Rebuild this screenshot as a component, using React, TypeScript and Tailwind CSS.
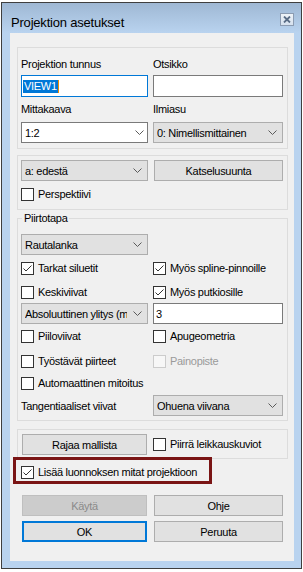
import React from "react";

function Chevron() {
  return (
    <svg width="9" height="5" viewBox="0 0 9 5" className="shrink-0">
      <path d="M0.5 0.5 L4.5 4.5 L8.5 0.5" stroke="#5a5a5a" strokeWidth="1" fill="none" />
    </svg>
  );
}

function Check({ checked = false, disabled = false }: { checked?: boolean; disabled?: boolean }) {
  return (
    <span
      className={
        disabled
          ? "w-[13px] h-[13px] border border-[#cccccc] bg-[#f7f7f7] flex items-center justify-center shrink-0"
          : "w-[13px] h-[13px] border border-[#333333] bg-white flex items-center justify-center shrink-0"
      }
    >
      {checked && (
        <svg width="11" height="11" viewBox="0 0 11 11">
          <path d="M1.5 5.5 L4 8 L9.5 2.5" stroke="#333333" strokeWidth="1" fill="none" />
        </svg>
      )}
    </span>
  );
}

function CheckRow({ label, checked = false, disabled = false }: { label: string; checked?: boolean; disabled?: boolean }) {
  return (
    <div className="flex items-center h-[13px] gap-[4px]">
      <Check checked={checked} disabled={disabled} />
      <span className={disabled ? "leading-[13px] whitespace-nowrap text-[#9a9a9a]" : "leading-[13px] whitespace-nowrap"}>{label}</span>
    </div>
  );
}

function GreySelect({ value, w }: { value: string; w: string }) {
  return (
    <div className={`${w} h-[21px] bg-[#e1e1e1] border border-[#adadad] flex items-center pl-[3px] pr-[5px]`}>
      <span className="flex-1 min-w-0 overflow-hidden whitespace-nowrap leading-[14px]">{value}</span>
      <span className="w-[6px] shrink-0" />
      <Chevron />
    </div>
  );
}

export default function App() {
  return (
    <div className="w-[303px] h-[572px] bg-white pt-[2px] pl-[1px] font-['Liberation_Sans',Arial,sans-serif] text-[11px] tracking-[-0.3px] text-black">
      <div className="w-[301px] h-[567px] border border-[#3f3f3f] bg-[#b9d3ef] flex flex-col">
        {/* Title bar */}
        <div className="h-[30px] shrink-0 bg-gradient-to-b from-[#9fb8d4] to-[#b9d3ef] flex items-start pl-[9px] pr-[7px]">
          <span className="mt-[12px] text-[13px] leading-[15px] tracking-[-0.2px] text-black">Projektion asetukset</span>
          <div className="ml-auto mt-[10px] w-[14px] h-[13px] border border-[#8c9cb2] bg-gradient-to-b from-[#eef3f8] to-[#d6e1ee] flex items-center justify-center">
            <svg width="8" height="7" viewBox="0 0 8 7">
              <path d="M1 0.5 L7 6.5 M7 0.5 L1 6.5" stroke="#5a6d86" strokeWidth="1.8" fill="none" />
            </svg>
          </div>
        </div>

        {/* Client area */}
        <div className="ml-[8px] w-[284px] h-[528px] shrink-0 bg-[#f0f0f0] px-[7px] flex flex-col">
          {/* Group 1 */}
          <div className="mt-[14px] w-[271px] border border-[#dcdcdc] pt-[9px] pb-[5px] pl-[3px] pr-[4px]">
            <div className="grid grid-cols-[127px_130px] gap-x-[5px]">
              <div className="h-[18px] leading-[14px]">Projektion tunnus</div>
              <div className="h-[18px] leading-[14px]">Otsikko</div>
              <div className="h-[22px] bg-white border border-[#0078d7] flex items-center pl-[1px]">
                <span className="bg-[#0078d7] text-white leading-[13px] h-[13px] pl-[1px] pr-[1px]">VIEW1</span>
                <span className="w-[1px] h-[13px] bg-[#f08c00]" />
              </div>
              <div className="h-[22px] bg-white border border-[#7a7a7a]" />
              <div className="mt-[5px] h-[20px] leading-[14px]">Mittakaava</div>
              <div className="mt-[5px] h-[20px] leading-[14px]">Ilmiasu</div>
              <div className="h-[21px] bg-white border border-[#7a7a7a] flex items-center pl-[3px] pr-[3px]">
                <span className="flex-1 leading-[14px]">1:2</span>
                <Chevron />
              </div>
              <GreySelect value="0: Nimellismittainen" w="w-[130px]" />
            </div>
          </div>

          {/* Group 2 */}
          <div className="mt-[6px] w-[271px] border border-[#dcdcdc] pt-[4px] pb-[8px] pl-[3px] pr-[4px]">
            <div className="flex gap-x-[6px]">
              <GreySelect value="a: edestä" w="w-[127px]" />
              <div className="w-[129px] h-[21px] bg-[#e1e1e1] border border-[#adadad] flex items-center justify-center leading-[14px]">
                Katselusuunta
              </div>
            </div>
            <div className="mt-[7px]">
              <CheckRow label="Perspektiivi" />
            </div>
          </div>

          {/* Group 3 */}
          <fieldset className="mt-[1px] w-[271px] border border-[#dcdcdc] pt-[8px] pb-[4px] pl-[3px] pr-[4px]">
            <legend className="ml-[1px] px-[2px] leading-[15px]">Piirtotapa</legend>
            <GreySelect value="Rautalanka" w="w-[127px]" />
            <div className="mt-[7px] grid grid-cols-[127px_130px] gap-x-[5px]">
              <CheckRow label="Tarkat siluetit" checked />
              <CheckRow label="Myös spline-pinnoille" checked />
            </div>
            <div className="mt-[11px] grid grid-cols-[127px_130px] gap-x-[5px]">
              <CheckRow label="Keskiviivat" />
              <CheckRow label="Myös putkiosille" checked />
            </div>
            <div className="mt-[4px] grid grid-cols-[127px_130px] gap-x-[5px]">
              <GreySelect value="Absoluuttinen ylitys (mm)" w="w-[127px]" />
              <div className="h-[21px] bg-white border border-[#7a7a7a] flex items-center pl-[2px] leading-[14px]">3</div>
            </div>
            <div className="mt-[6px] grid grid-cols-[127px_130px] gap-x-[5px]">
              <CheckRow label="Piiloviivat" />
              <CheckRow label="Apugeometria" />
            </div>
            <div className="mt-[12px] grid grid-cols-[127px_130px] gap-x-[5px]">
              <CheckRow label="Työstävät piirteet" />
              <CheckRow label="Painopiste" disabled />
            </div>
            <div className="mt-[9px]">
              <CheckRow label="Automaattinen mitoitus" />
            </div>
            <div className="mt-[5px] grid grid-cols-[127px_130px] gap-x-[5px] items-center">
              <span className="leading-[14px] whitespace-nowrap">Tangentiaaliset viivat</span>
              <GreySelect value="Ohuena viivana" w="w-[130px]" />
            </div>
          </fieldset>

          {/* Group 4 */}
          <div className="mt-[8px] w-[271px] border border-[#dcdcdc] pt-[4px] pb-[3px] pl-[4px] pr-[4px] flex items-center gap-x-[6px]">
            <div className="w-[125px] h-[21px] bg-[#e1e1e1] border border-[#adadad] flex items-center justify-center leading-[14px]">
              Rajaa mallista
            </div>
            <CheckRow label="Piirrä leikkauskuviot" />
          </div>

          {/* Highlighted checkbox */}
          <div className="relative mt-[7px] ml-[4px]">
            <CheckRow label="Lisää luonnoksen mitat projektioon" checked />
            <div className="absolute left-[-8px] top-[-9px] w-[199px] h-[27px] border-[3px] border-[#7a1414]" />
          </div>

          {/* Buttons */}
          <div className="mt-[16px] ml-[5px] grid grid-cols-[125px_129px] gap-x-[7px] gap-y-[5px]">
            <div className="h-[21px] bg-[#cccccc] border border-[#bfbfbf] flex items-center justify-center leading-[14px] text-[#8a8a8a]">
              Käytä
            </div>
            <div className="h-[21px] bg-[#e1e1e1] border border-[#adadad] flex items-center justify-center leading-[14px]">
              Ohje
            </div>
            <div className="h-[21px] bg-[#e1e1e1] border-2 border-[#0078d7] flex items-center justify-center leading-[14px]">
              OK
            </div>
            <div className="h-[21px] bg-[#e1e1e1] border border-[#adadad] flex items-center justify-center leading-[14px]">
              Peruuta
            </div>
          </div>
        </div>
      </div>
    </div>
  );
}
